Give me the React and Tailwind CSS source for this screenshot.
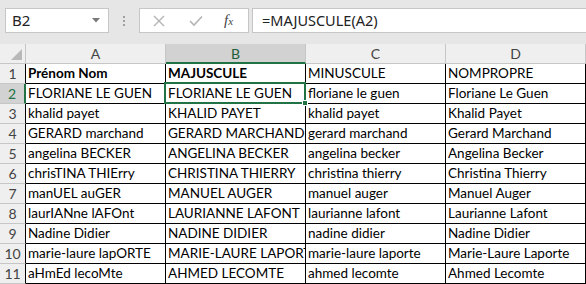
import React from "react";

const rows = [
  ["Prénom Nom", "MAJUSCULE", "MINUSCULE", "NOMPROPRE"],
  ["FLORIANE LE GUEN", "FLORIANE LE GUEN", "floriane le guen", "Floriane Le Guen"],
  ["khalid payet", "KHALID PAYET", "khalid payet", "Khalid Payet"],
  ["GERARD marchand", "GERARD MARCHAND", "gerard marchand", "Gerard Marchand"],
  ["angelina BECKER", "ANGELINA BECKER", "angelina becker", "Angelina Becker"],
  ["chrisTINA THIErry", "CHRISTINA THIERRY", "christina thierry", "Christina Thierry"],
  ["manUEL auGER", "MANUEL AUGER", "manuel auger", "Manuel Auger"],
  ["laurIANne lAFOnt", "LAURIANNE LAFONT", "laurianne lafont", "Laurianne Lafont"],
  ["Nadine Didier", "NADINE DIDIER", "nadine didier", "Nadine Didier"],
  ["marie-laure lapORTE", "MARIE-LAURE LAPORTE", "marie-laure laporte", "Marie-Laure Laporte"],
  ["aHmEd lecoMte", "AHMED LECOMTE", "ahmed lecomte", "Ahmed Lecomte"],
];

const cols = ["A", "B", "C", "D"];
const cellFont = { fontFamily: "Lato, 'Open Sans', sans-serif" };

export default function App() {
  return (
    <div className="relative w-[586px] h-[284px] overflow-hidden bg-white" style={cellFont}>
      {/* Formula bar */}
      <div className="h-[44px] bg-[#e6e6e6] flex items-start pt-[8px] pl-[5px]">
        <div className="w-[104px] h-[25px] bg-white border border-[#c6c6c6] flex items-center justify-between pl-[6px] pr-[8px]">
          <span className="text-[15px] text-[#222] font-['Noto_Sans',sans-serif]">B2</span>
          <svg width="8" height="5" viewBox="0 0 8 5"><path d="M0 0 L8 0 L4 4.5 Z" fill="#7a7a7a" /></svg>
        </div>
        <div className="w-[30px] h-[25px] flex flex-col items-center justify-center gap-[2px]">
          <div className="w-[2px] h-[2px] bg-[#a0a0a0]" />
          <div className="w-[2px] h-[2px] bg-[#a0a0a0]" />
          <div className="w-[2px] h-[2px] bg-[#a0a0a0]" />
        </div>
        <div className="w-[110px] h-[25px] bg-white border border-[#c6c6c6] flex items-center">
          <svg className="ml-[13px]" width="12" height="12" viewBox="0 0 12 12"><path d="M1 1 L11 11 M11 1 L1 11" stroke="#b4b4b4" strokeWidth="1.4" /></svg>
          <svg className="ml-[24px]" width="14" height="12" viewBox="0 0 14 12"><path d="M1 6 L5 10 L13 1.5" stroke="#b4b4b4" strokeWidth="1.6" fill="none" /></svg>
          <span className="ml-[21px] text-[#444] italic font-['Liberation_Serif',serif] text-[15px] leading-none">f<span className="text-[11px]">x</span></span>
        </div>
        <div className="ml-[3px] flex-1 h-[25px] bg-white border border-[#c6c6c6] border-r-0 flex items-center pl-[9px]">
          <span className="text-[14.5px] text-[#222] font-['Noto_Sans',sans-serif]">=MAJUSCULE(A2)</span>
        </div>
      </div>

      {/* Grid */}
      <div className="grid grid-cols-[26px_140px_140px_140px_140px] auto-rows-[20px]">
        {/* header row */}
        <div className="bg-[#efefef] border-r border-b border-[#c6c6c6] relative">
          <svg className="absolute right-[3px] bottom-[3px]" width="11" height="11" viewBox="0 0 11 11"><path d="M11 0 L11 11 L0 11 Z" fill="#b8b8b8" /></svg>
        </div>
        {cols.map((c) => (
          <div
            key={c}
            className={
              c === "B"
                ? "bg-[#d2d2d2] border-r border-[#c6c6c6] border-b-2 border-b-[#217346] flex items-center justify-center text-[14px] text-[#1d5e38]"
                : "bg-[#efefef] border-r border-b border-[#c6c6c6] flex items-center justify-center text-[14px] text-[#444]"
            }
          >
            {c}
          </div>
        ))}
        {rows.map((r, i) => (
          <React.Fragment key={i}>
            <div
              className={
                i === 1
                  ? "bg-[#d2d2d2] border-r-2 border-r-[#217346] border-b border-b-[#c6c6c6] flex items-center justify-center text-[14px] text-[#217346]"
                  : "bg-[#efefef] border-r border-r-black border-b border-b-[#c6c6c6] flex items-center justify-center text-[14px] text-[#444]"
              }
            >
              {i + 1}
            </div>
            {r.map((t, j) => (
              <div
                key={j}
                className={
                  "border-r border-b border-black pl-[2px] flex items-center overflow-hidden whitespace-nowrap text-[13.5px] text-black" +
                  (i === 0 && j < 2 ? " font-bold" : "")
                }
              >
                {t}
              </div>
            ))}
          </React.Fragment>
        ))}
      </div>

      {/* Selection */}
      <div className="absolute left-[164px] top-[82px] w-[142px] h-[22px] border-2 border-[#217346] pointer-events-none" />
      <div className="absolute left-[302px] top-[100px] w-[6px] h-[6px] bg-[#217346] border border-white pointer-events-none" />
    </div>
  );
}
